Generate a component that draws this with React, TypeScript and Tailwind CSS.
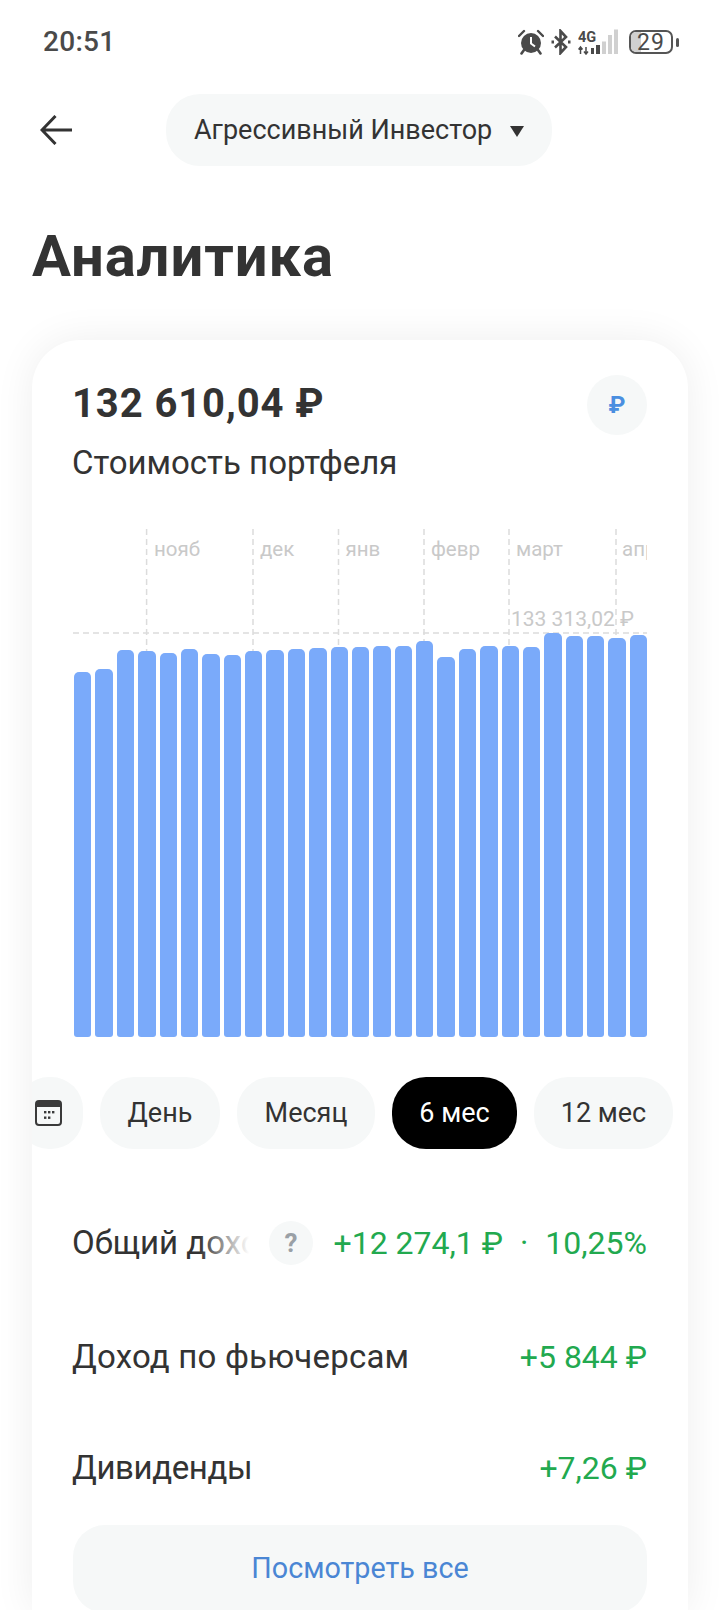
const FONT = "font-['Roboto',sans-serif]";

const bars = [365, 368, 387, 386, 384, 388, 383, 382, 386, 387, 388, 389, 390, 390, 391, 391, 396, 380, 388, 391, 391, 390, 404, 401, 401, 399, 402];

const months = [
  { label: "нояб", x: 81, line: 73.6 },
  { label: "дек", x: 187, line: 180 },
  { label: "янв", x: 272.5, line: 265.5 },
  { label: "февр", x: 358, line: 351 },
  { label: "март", x: 443, line: 436 },
  { label: "апр", x: 549, line: 543 },
];

const periods = [
  { label: "День", width: "w-[120px]" },
  { label: "Месяц", width: "w-[138px]" },
  { label: "6 мес", width: "w-[125px]" },
  { label: "12 мес", width: "w-[139px]" },
];

function AlarmIcon() {
  return (
    <svg width="26" height="26" viewBox="0 0 26 26">
      <circle cx="13" cy="14" r="10" fill="#4a4a4a" />
      <path d="M13 8v6.5l4 3" fill="none" stroke="#fff" strokeWidth="2" />
      <path d="M1 7l5-5M25 7l-5-5" stroke="#4a4a4a" strokeWidth="2.4" strokeLinecap="round" />
      <path d="M6 21l-2.5 3.5M20 21l2.5 3.5" stroke="#4a4a4a" strokeWidth="2.6" strokeLinecap="round" />
    </svg>
  );
}

function BluetoothIcon() {
  return (
    <svg width="20" height="26" viewBox="0 0 20 26">
      <path d="M4 7.5l11 10.5-5.5 6V2L15 8 4 18.5" fill="none" stroke="#4a4a4a" strokeWidth="2.6" />
      <path d="M0.5 13h2.5M17 13h2.5" stroke="#4a4a4a" strokeWidth="3" />
    </svg>
  );
}

function SignalIcon() {
  return (
    <svg width="42" height="26" viewBox="0 0 42 26">
      <text x="0" y="13" fontFamily="Roboto, sans-serif" fontWeight="700" fontSize="14.5" fill="#4a4a4a">4G</text>
      <path d="M2.5 18v7M0.5 20.5l2-2.5 2 2.5M8 25v-7M6 22.5l2 2.5 2-2.5" fill="none" stroke="#4a4a4a" strokeWidth="1.5" />
      <rect x="13" y="19" width="3" height="6" fill="#4a4a4a" />
      <rect x="18" y="16" width="4" height="9" fill="#4a4a4a" />
      <rect x="24" y="12.5" width="4" height="12.5" fill="#d0d0d0" />
      <rect x="30" y="6" width="4" height="19" fill="#d0d0d0" />
      <rect x="36" y="0.5" width="4" height="24.5" fill="#d0d0d0" />
    </svg>
  );
}

function Battery() {
  return (
    <div className="flex items-center gap-[3px]">
      <div className="relative w-[44px] h-[24px] rounded-[7px] border-[2.5px] border-[#555] overflow-hidden flex items-center justify-center">
        <div className="absolute left-0 top-0 bottom-0 w-[10px] bg-[#d0d0d0]" />
        <span className="relative text-[23px] leading-none tracking-[1px] text-[#4a4a4a]">29</span>
      </div>
      <div className="w-[3px] h-[9px] rounded-sm bg-[#555]" />
    </div>
  );
}

function CalendarIcon() {
  return (
    <svg width="27" height="26" viewBox="0 0 27 26">
      <rect x="1" y="1" width="25" height="24" rx="3" fill="none" stroke="#3a3a3a" strokeWidth="2" />
      <path d="M1 4a3 3 0 0 1 3-3h19a3 3 0 0 1 3 3v3H1z" fill="#3a3a3a" />
      <g fill="#3a3a3a">
        <rect x="9" y="11" width="2.4" height="2.4" />
        <rect x="13" y="11" width="2.4" height="2.4" />
        <rect x="17" y="11" width="2.4" height="2.4" />
        <rect x="9" y="16.5" width="2.4" height="2.4" />
        <rect x="13" y="16.5" width="2.4" height="2.4" />
      </g>
    </svg>
  );
}

function Chart() {
  return (
    <div className="relative h-[508px] overflow-hidden">
      <svg className="absolute inset-0" width="574" height="508">
        {months.map((m) => (
          <line key={m.label} x1={m.line} x2={m.line} y1="0" y2="140" stroke="#dcdcdc" strokeWidth="1.5" strokeDasharray="6 4" />
        ))}
        <line x1="0" x2="574" y1="104" y2="104" stroke="#dcdcdc" strokeWidth="1.5" strokeDasharray="6 4" />
      </svg>
      {months.map((m) => (
        <span key={m.label} className="absolute top-[7px] text-[20.5px] leading-[26px] text-[#c9c9c9]" style={{ left: m.x }}>
          {m.label}
        </span>
      ))}
      <span className="absolute top-[77px] left-[438px] text-[21px] leading-[26px] text-[#c9c9c9] whitespace-nowrap">133 313,02 ₽</span>
      <div className="absolute inset-0 pl-[1px] flex items-end gap-[4px]">
        {bars.map((h, i) => (
          <div key={i} className="flex-1 rounded-t-[5px] rounded-b-[3px] bg-[#7aaafa]" style={{ height: h }} />
        ))}
      </div>
    </div>
  );
}

export default function App() {
  return (
    <div className={`w-[720px] h-[1610px] overflow-hidden bg-white text-[#333] ${FONT}`}>
      {/* status bar */}
      <div className="h-[84px] pl-[43px] pr-[41px] flex items-center justify-between">
        <span className="text-[28px] font-medium tracking-[0.3px] text-[#4a4a4a]">20:51</span>
        <div className="flex items-center">
          <AlarmIcon />
          <div className="ml-[7px]"><BluetoothIcon /></div>
          <div className="ml-[7px]"><SignalIcon /></div>
          <div className="ml-[9px]"><Battery /></div>
        </div>
      </div>

      {/* nav */}
      <div className="mt-[10px] h-[72px] pl-[40px] flex items-center">
        <svg width="32" height="30" viewBox="0 0 32 30">
          <path d="M32 15H2M15.5 1L2 15l13.5 14" fill="none" stroke="#333" strokeWidth="3" />
        </svg>
        <div className="ml-[94px] w-[386px] h-[72px] rounded-[34px] bg-[#f6f8f8] pl-[28px] flex items-center">
          <span className="text-[27px] whitespace-nowrap">Агрессивный Инвестор</span>
          <svg className="ml-[18px] mt-[2px]" width="14" height="11" viewBox="0 0 14 11">
            <path d="M0 0h14L7 11z" fill="#333" />
          </svg>
        </div>
      </div>

      <div className="h-[174px] pt-[58px] pl-[32px]">
        <h1 className="text-[58px] leading-[64px] font-bold tracking-[0.9px]">Аналитика</h1>
      </div>

      {/* card */}
      <div className="ml-[32px] w-[656px] rounded-t-[48px] bg-white shadow-[0_0_40px_rgba(0,0,0,0.07)]">
        <div className="px-[41px] pt-[35px]">
          <div className="flex items-start justify-between">
            <div className="-ml-[1px]">
              <div className="mt-[5px] text-[40px] leading-[48px] font-bold tracking-[0.9px]">132 610,04 ₽</div>
              <div className="mt-[15px] text-[33px] leading-[40px]">Стоимость портфеля</div>
            </div>
            <div className="w-[60px] h-[60px] rounded-full bg-[#f6f8f8] flex items-center justify-center text-[24px] font-bold text-[#4a8fe0]">₽</div>
          </div>
          <div className="mt-[46px]">
            <Chart />
          </div>
        </div>

        <div className="mt-[40px] h-[72px] overflow-hidden flex gap-[17px]">
          <div className="shrink-0 -ml-[15px] w-[66px] rounded-[32px] bg-[#f6f8f8] flex items-center justify-center pr-[4px]">
            <CalendarIcon />
          </div>
          {periods.map((p) => (
            <div
              key={p.label}
              className={`shrink-0 ${p.width} rounded-[34px] flex items-center justify-center text-[27px] ${p.label === "6 мес" ? "bg-black text-white" : "bg-[#f6f8f8]"}`}
            >
              {p.label}
            </div>
          ))}
        </div>

        <div className="pl-[40px] pr-[41px]">
          <div className="mt-[72px] h-[44px] flex items-center justify-between">
            <div className="flex items-center">
              <div className="relative w-[177px] overflow-hidden whitespace-nowrap text-[33px] leading-[44px]">
                Общий доход
                <div className="absolute right-0 inset-y-0 w-[50px] bg-gradient-to-r from-transparent to-white" />
              </div>
              <div className="ml-[20px] w-[44px] h-[44px] rounded-full bg-[#f6f8f8] flex items-center justify-center text-[26px] font-bold text-[#9aa0a6]">?</div>
            </div>
            <div className="flex items-center gap-[17px] text-[32px] text-[#22a94f] whitespace-nowrap">
              <span>+12 274,1 ₽</span>
              <span>·</span>
              <span>10,25%</span>
            </div>
          </div>
          <div className="mt-[70px] h-[44px] flex items-center justify-between text-[33px]">
            <span className="tracking-[0.2px]">Доход по фьючерсам</span>
            <span className="text-[32px] text-[#22a94f]">+5 844 ₽</span>
          </div>
          <div className="mt-[67px] h-[44px] flex items-center justify-between text-[33px]">
            <span className="tracking-[-0.4px]">Дивиденды</span>
            <span className="text-[32px] text-[#22a94f]">+7,26 ₽</span>
          </div>
          <div className="mt-[35px] ml-[1px] h-[88px] rounded-[32px] bg-[#f6f8f8] flex items-center justify-center text-[28.7px] text-[#4a86d4]">
            Посмотреть все
          </div>
        </div>
      </div>
    </div>
  );
}
